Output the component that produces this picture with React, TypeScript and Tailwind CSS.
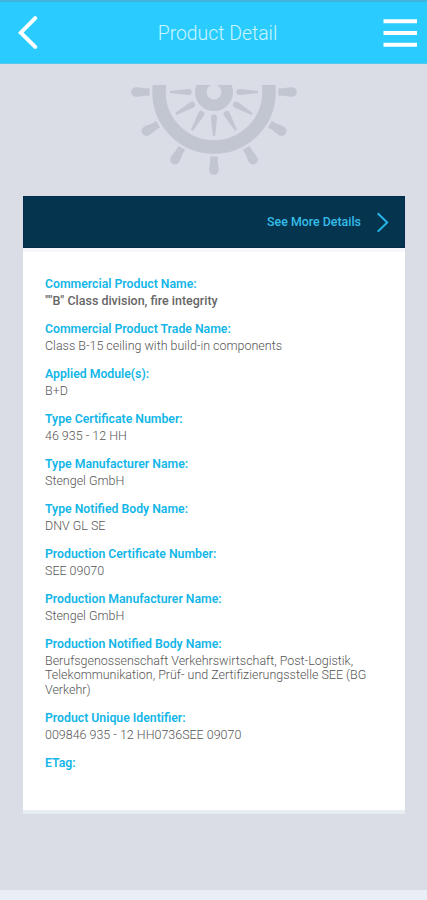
const fields = [
  { label: "Commercial Product Name:", value: "\"\"B\" Class division, fire integrity", strong: true },
  { label: "Commercial Product Trade Name:", value: "Class B-15 ceiling with build-in components" },
  { label: "Applied Module(s):", value: "B+D" },
  { label: "Type Certificate Number:", value: "46 935 - 12 HH" },
  { label: "Type Manufacturer Name:", value: "Stengel GmbH" },
  { label: "Type Notified Body Name:", value: "DNV GL SE" },
  { label: "Production Certificate Number:", value: "SEE 09070" },
  { label: "Production Manufacturer Name:", value: "Stengel GmbH" },
  {
    label: "Production Notified Body Name:",
    value: "Berufsgenossenschaft Verkehrswirtschaft, Post-Logistik, Telekommunikation, Prüf- und Zertifizierungsstelle SEE (BG Verkehr)",
  },
  { label: "Product Unique Identifier:", value: "009846 935 - 12 HH0736SEE 09070" },
  { label: "ETag:", value: "" },
];

export default function App() {
  return (
    <div className="flex h-[900px] w-[427px] flex-col overflow-hidden bg-[#dadde6] font-['Roboto',sans-serif]">
      <Header />
      <main className="flex flex-1 flex-col pr-[22px] pl-[23px]">
        <Wheel />
        <section className="mt-[20px] h-[618px] border-b-4 border-[#e8ecf3] bg-white">
          <button className="flex h-[52px] w-full items-center justify-end border border-[#042a4c] bg-[#05344f] pr-[15px] text-[12.4px] font-medium text-[#35bde9]">
            <span>See More Details</span>
            <svg viewBox="0 0 12 20" className="ml-4 h-5 w-3" fill="none" stroke="#27b5e8" strokeWidth="2">
              <path d="M.7 1.2l9.5 9.3-9.5 9.2" />
            </svg>
          </button>
          <div className="h-1 bg-[#f5f7fb]" />
          <dl className="px-[22px] pt-6">
            {fields.map((f) => (
              <Field key={f.label} {...f} />
            ))}
          </dl>
        </section>
      </main>
      <div className="h-[10px] bg-[#e8edf6]" />
    </div>
  );
}

function Header() {
  return (
    <header className="flex h-16 items-center justify-between border-t-2 border-b border-t-[#3fb5de] border-b-[#58c6ea] bg-[#2accff] pr-[10px] pl-[18px]">
      <svg viewBox="0 0 20 34" className="h-[34px] w-5" fill="none" stroke="#fff" strokeWidth="4" strokeLinecap="round">
        <path d="M17.2 2.2L2.8 16.7l14.4 14.2" />
      </svg>
      <h1 className="mt-[3px] ml-[14px] text-[19.4px] font-light text-[#c9f5ff]">Product Detail</h1>
      <svg viewBox="0 0 34 30" className="h-[30px] w-[34px]" fill="none" stroke="#fff" strokeWidth="4" strokeLinecap="butt">
        <path d="M.5 3.2h33.5M.5 15h33.5M.5 26.7h33.5" />
      </svg>
    </header>
  );
}

function Field({ label, value, strong }: { label: string; value: string; strong?: boolean }) {
  return (
    <div className="mb-[13px]">
      <dt className="text-[12.25px] leading-[17.5px] font-semibold text-[#12b6e8]">{label}</dt>
      <dd className={`text-[12.48px] leading-[14.5px] ${strong ? "font-medium text-[#666]" : "font-light text-[#555]"}`}>{value}</dd>
    </div>
  );
}

// Lower half of a ship's wheel, cut off just above the hub
function Wheel() {
  return (
    <svg viewBox="-83 -7 166 91" className="mt-[21px] ml-[108px] h-[91px] w-[166px] shrink-0" fill="#c1c6d0">
      <circle r="55" fill="none" stroke="#c1c6d0" strokeWidth="13.5" />
      <circle r="13.2" fill="none" stroke="#c1c6d0" strokeWidth="11.6" />
      {[0, 30, 60, 90, 120, 150, 180].map((a) => (
        <g key={a} transform={`rotate(${a})`}>
          <path d="M22.5-1.5Q23-3.3 26-3.1L44-1.1V1.1L26 3.1Q23 3.3 22.5 1.5Z" />
          <path d="M64.5-3.8L70-3.8Q74-4.8 78-4.8Q82.8-4.4 82.8 0Q82.8 4.4 78 4.8Q74 4.8 70 3.8L64.5 3.8Z" />
        </g>
      ))}
    </svg>
  );
}
